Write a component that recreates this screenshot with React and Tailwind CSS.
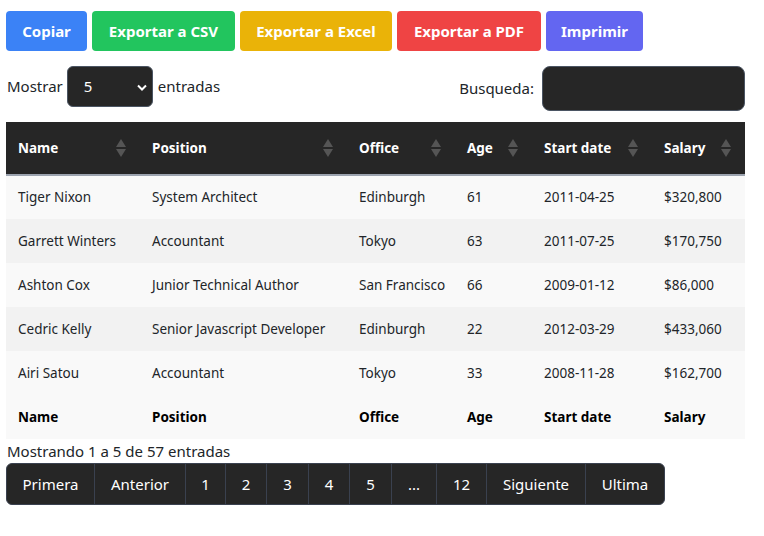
import React from 'react';

const rows = [
  ['Tiger Nixon', 'System Architect', 'Edinburgh', '61', '2011-04-25', '$320,800'],
  ['Garrett Winters', 'Accountant', 'Tokyo', '63', '2011-07-25', '$170,750'],
  ['Ashton Cox', 'Junior Technical Author', 'San Francisco', '66', '2009-01-12', '$86,000'],
  ['Cedric Kelly', 'Senior Javascript Developer', 'Edinburgh', '22', '2012-03-29', '$433,060'],
  ['Airi Satou', 'Accountant', 'Tokyo', '33', '2008-11-28', '$162,700'],
];

const cols = [
  { label: 'Name', w: 'w-[134px]' },
  { label: 'Position', w: 'w-[207px]' },
  { label: 'Office', w: 'w-[108px]' },
  { label: 'Age', w: 'w-[77px]' },
  { label: 'Start date', w: 'w-[120px]' },
  { label: 'Salary', w: 'w-[93px]' },
];

const SortIcon = () => (
  <svg width="10" height="18" viewBox="0 0 10 18" className="shrink-0">
    <polygon points="5,0 10,8 0,8" fill="#555" />
    <polygon points="0,10 10,10 5,18" fill="#555" />
  </svg>
);

const pages = ['Primera', 'Anterior', '1', '2', '3', '4', '5', '...', '12', 'Siguiente', 'Ultima'];
const pageW = ['w-[87px]', 'w-[91px]', 'w-[40px]', 'w-[41px]', 'w-[42px]', 'w-[41px]', 'w-[42px]', 'w-[45px]', 'w-[50px]', 'w-[99px]', 'w-[79px]'];

export default function App() {
  return (
    <div className="w-[764px] h-[536px] bg-white text-black font-['Noto_Sans',sans-serif]">
      <div className="pl-[6px] pt-[11px] flex gap-[5px]">
        <button className="h-[40px] w-[81px] rounded bg-[#3b82f6] text-white font-bold text-[15px]">Copiar</button>
        <button className="h-[40px] w-[143px] rounded bg-[#22c55e] text-white font-bold text-[15px]">Exportar a CSV</button>
        <button className="h-[40px] w-[152px] rounded bg-[#eab308] text-white font-bold text-[15px]">Exportar a Excel</button>
        <button className="h-[40px] w-[144px] rounded bg-[#ef4444] text-white font-bold text-[15px]">Exportar a PDF</button>
        <button className="h-[40px] w-[97px] rounded bg-[#6366f1] text-white font-bold text-[15px]">Imprimir</button>
      </div>

      <div className="flex justify-between items-start pl-[7px] pr-[19px] mt-[15px]">
        <div className="flex items-center h-[40px] text-[15px]">
          <span className="mr-[4px] text-[#212529]">Mostrar</span>
          <div className="relative w-[86px] h-[41px] rounded-md bg-[#262626] border border-[#4b5563] flex items-center pl-[16px] text-white">
            5
            <svg width="10" height="7" viewBox="0 0 10 7" className="absolute right-[5px] top-[17px]">
              <path d="M1 1.5 L5 5.5 L9 1.5" stroke="white" strokeWidth="2" fill="none" />
            </svg>
          </div>
          <span className="ml-[5px] text-[#212529]">entradas</span>
        </div>
        <div className="flex items-center h-[45px] text-[15px]">
          <span className="mr-[8px] text-[#212529]">Busqueda:</span>
          <div className="w-[203px] h-[45px] rounded-lg bg-[#262626] border border-[#4b5563]" />
        </div>
      </div>

      <table className="ml-[6px] mt-[11px] w-[739px] border-collapse text-[13.5px] table-fixed">
        <thead>
          <tr className="bg-[#262626] text-white h-[53px] border-b-2 border-[#9ca3af]">
            {cols.map((c) => (
              <th key={c.label} className={`${c.w} text-left font-bold pl-[12px] pr-[14px]`}>
                <div className="flex items-center justify-between">
                  <span>{c.label}</span>
                  <SortIcon />
                </div>
              </th>
            ))}
          </tr>
        </thead>
        <tbody>
          {rows.map((r, i) => (
            <tr key={i} className={`h-[44px] ${i % 2 === 0 ? 'bg-[#f9f9f9]' : 'bg-[#f2f2f2]'} text-[#212529]`}>
              {r.map((v, j) => (
                <td key={j} className="pl-[12px] whitespace-nowrap">{v}</td>
              ))}
            </tr>
          ))}
        </tbody>
        <tfoot>
          <tr className="h-[44px] bg-[#f9f9f9]">
            {cols.map((c) => (
              <th key={c.label} className="text-left font-bold pl-[12px]">{c.label}</th>
            ))}
          </tr>
        </tfoot>
      </table>

      <div className="pl-[7px] text-[15px] leading-[24px] text-[#212529]">Mostrando 1 a 5 de 57 entradas</div>

      <div className="ml-[6px] flex h-[42px] w-fit rounded-md bg-[#262626] border border-[#3a414f] text-white text-[15px] overflow-hidden">
        {pages.map((p, i) => (
          <div key={p} className={`${pageW[i]} flex items-center justify-center ${i > 0 ? 'border-l border-[#3a414f]' : ''}`}>
            {p}
          </div>
        ))}
      </div>
    </div>
  );
}
